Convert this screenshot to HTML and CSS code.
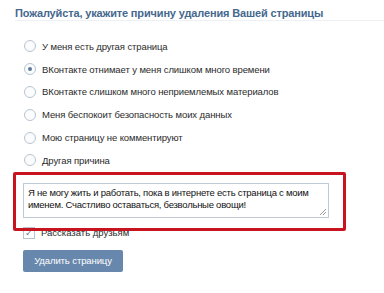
FILE: index.html
```html
<!DOCTYPE html>
<html lang="ru">
<head>
<meta charset="utf-8">
<link rel="stylesheet" href="styles.css">
</head>
<body>
<div class="page">
  <div class="title">Пожалуйста, укажите причину удаления Вашей страницы</div>
  <ul class="reasons">
    <li class="reason"><span class="radio"></span>У меня есть другая страница</li>
    <li class="reason"><span class="radio on"></span>ВКонтакте отнимает у меня слишком много времени</li>
    <li class="reason"><span class="radio"></span>ВКонтакте слишком много неприемлемых материалов</li>
    <li class="reason"><span class="radio"></span>Меня беспокоит безопасность моих данных</li>
    <li class="reason"><span class="radio"></span>Мою страницу не комментируют</li>
    <li class="reason"><span class="radio"></span>Другая причина</li>
  </ul>
  <div class="comment">
    <div class="textarea">Я не могу жить и работать, пока в интернете есть страница с моим именем. Счастливо оставаться, безвольные овощи!<span class="grip"></span></div>
    <div class="highlight"></div>
  </div>
  <div class="share"><span class="check">✓</span>Рассказать друзьям</div>
  <div class="button">Удалить страницу</div>
</div>
</body>
</html>
```
FILE: styles.css
```css
html, body { margin: 0; padding: 0; background: #fff; }
body { font-family: "Liberation Sans", Arial, sans-serif; font-size: 9.5px; color: #000; }
.page { padding: 7px 0 0 15px; }
.title {
  font-weight: bold; font-size: 11px; letter-spacing: -0.15px; color: #45688e;
  line-height: 12px; padding-bottom: 1px; border-bottom: 1px solid #eef1f4;
}
.reasons { list-style: none; margin: 0; padding: 14px 0 0 9px; }
.reason { display: flex; align-items: center; height: 22.8px; color: #2b2b2b; letter-spacing: -0.1px; }
.radio {
  width: 10px; height: 10px; border: 1px solid #b9c4d0; border-radius: 50%;
  margin-right: 6px; background: #fbfcfd; position: relative; flex: none;
}
.radio.on::after {
  content: ""; position: absolute; left: 3px; top: 3px; width: 4px; height: 4px;
  border-radius: 50%; background: #5d7a99;
}
.comment { position: relative; margin: 11px 0 0 8px; width: 305px; }
.textarea {
  position: relative; border: 1px solid #c0cad5; height: 29px;
  padding: 3px 4px 1px; line-height: 12px; color: #111; width: 296px; box-sizing: content-box;
  letter-spacing: -0.25px;
}
.grip {
  position: absolute; right: 2px; bottom: 2px; width: 6px; height: 6px;
  background: linear-gradient(135deg, transparent 45%, #999 45%, #999 55%, transparent 55%, transparent 70%, #999 70%, #999 80%, transparent 80%);
}
.highlight {
  position: absolute; left: -10px; top: -11px; right: -18px; bottom: -13px;
  border: 3px solid #c8141e; border-radius: 2px;
}
.share { display: flex; align-items: center; margin: 9px 0 0 8px; color: #2b2b2b; }
.check {
  width: 10px; height: 10px; border: 1px solid #b9c4d0; margin-right: 6px;
  font-size: 9px; line-height: 10px; text-align: center; color: #5d7a99;
}
.button {
  display: inline-block; margin: 11px 0 0 8px; width: 100px; height: 22px; line-height: 22px;
  background: #6787ad; color: #fff; text-align: center; border-radius: 2px; letter-spacing: -0.1px;
}
```
